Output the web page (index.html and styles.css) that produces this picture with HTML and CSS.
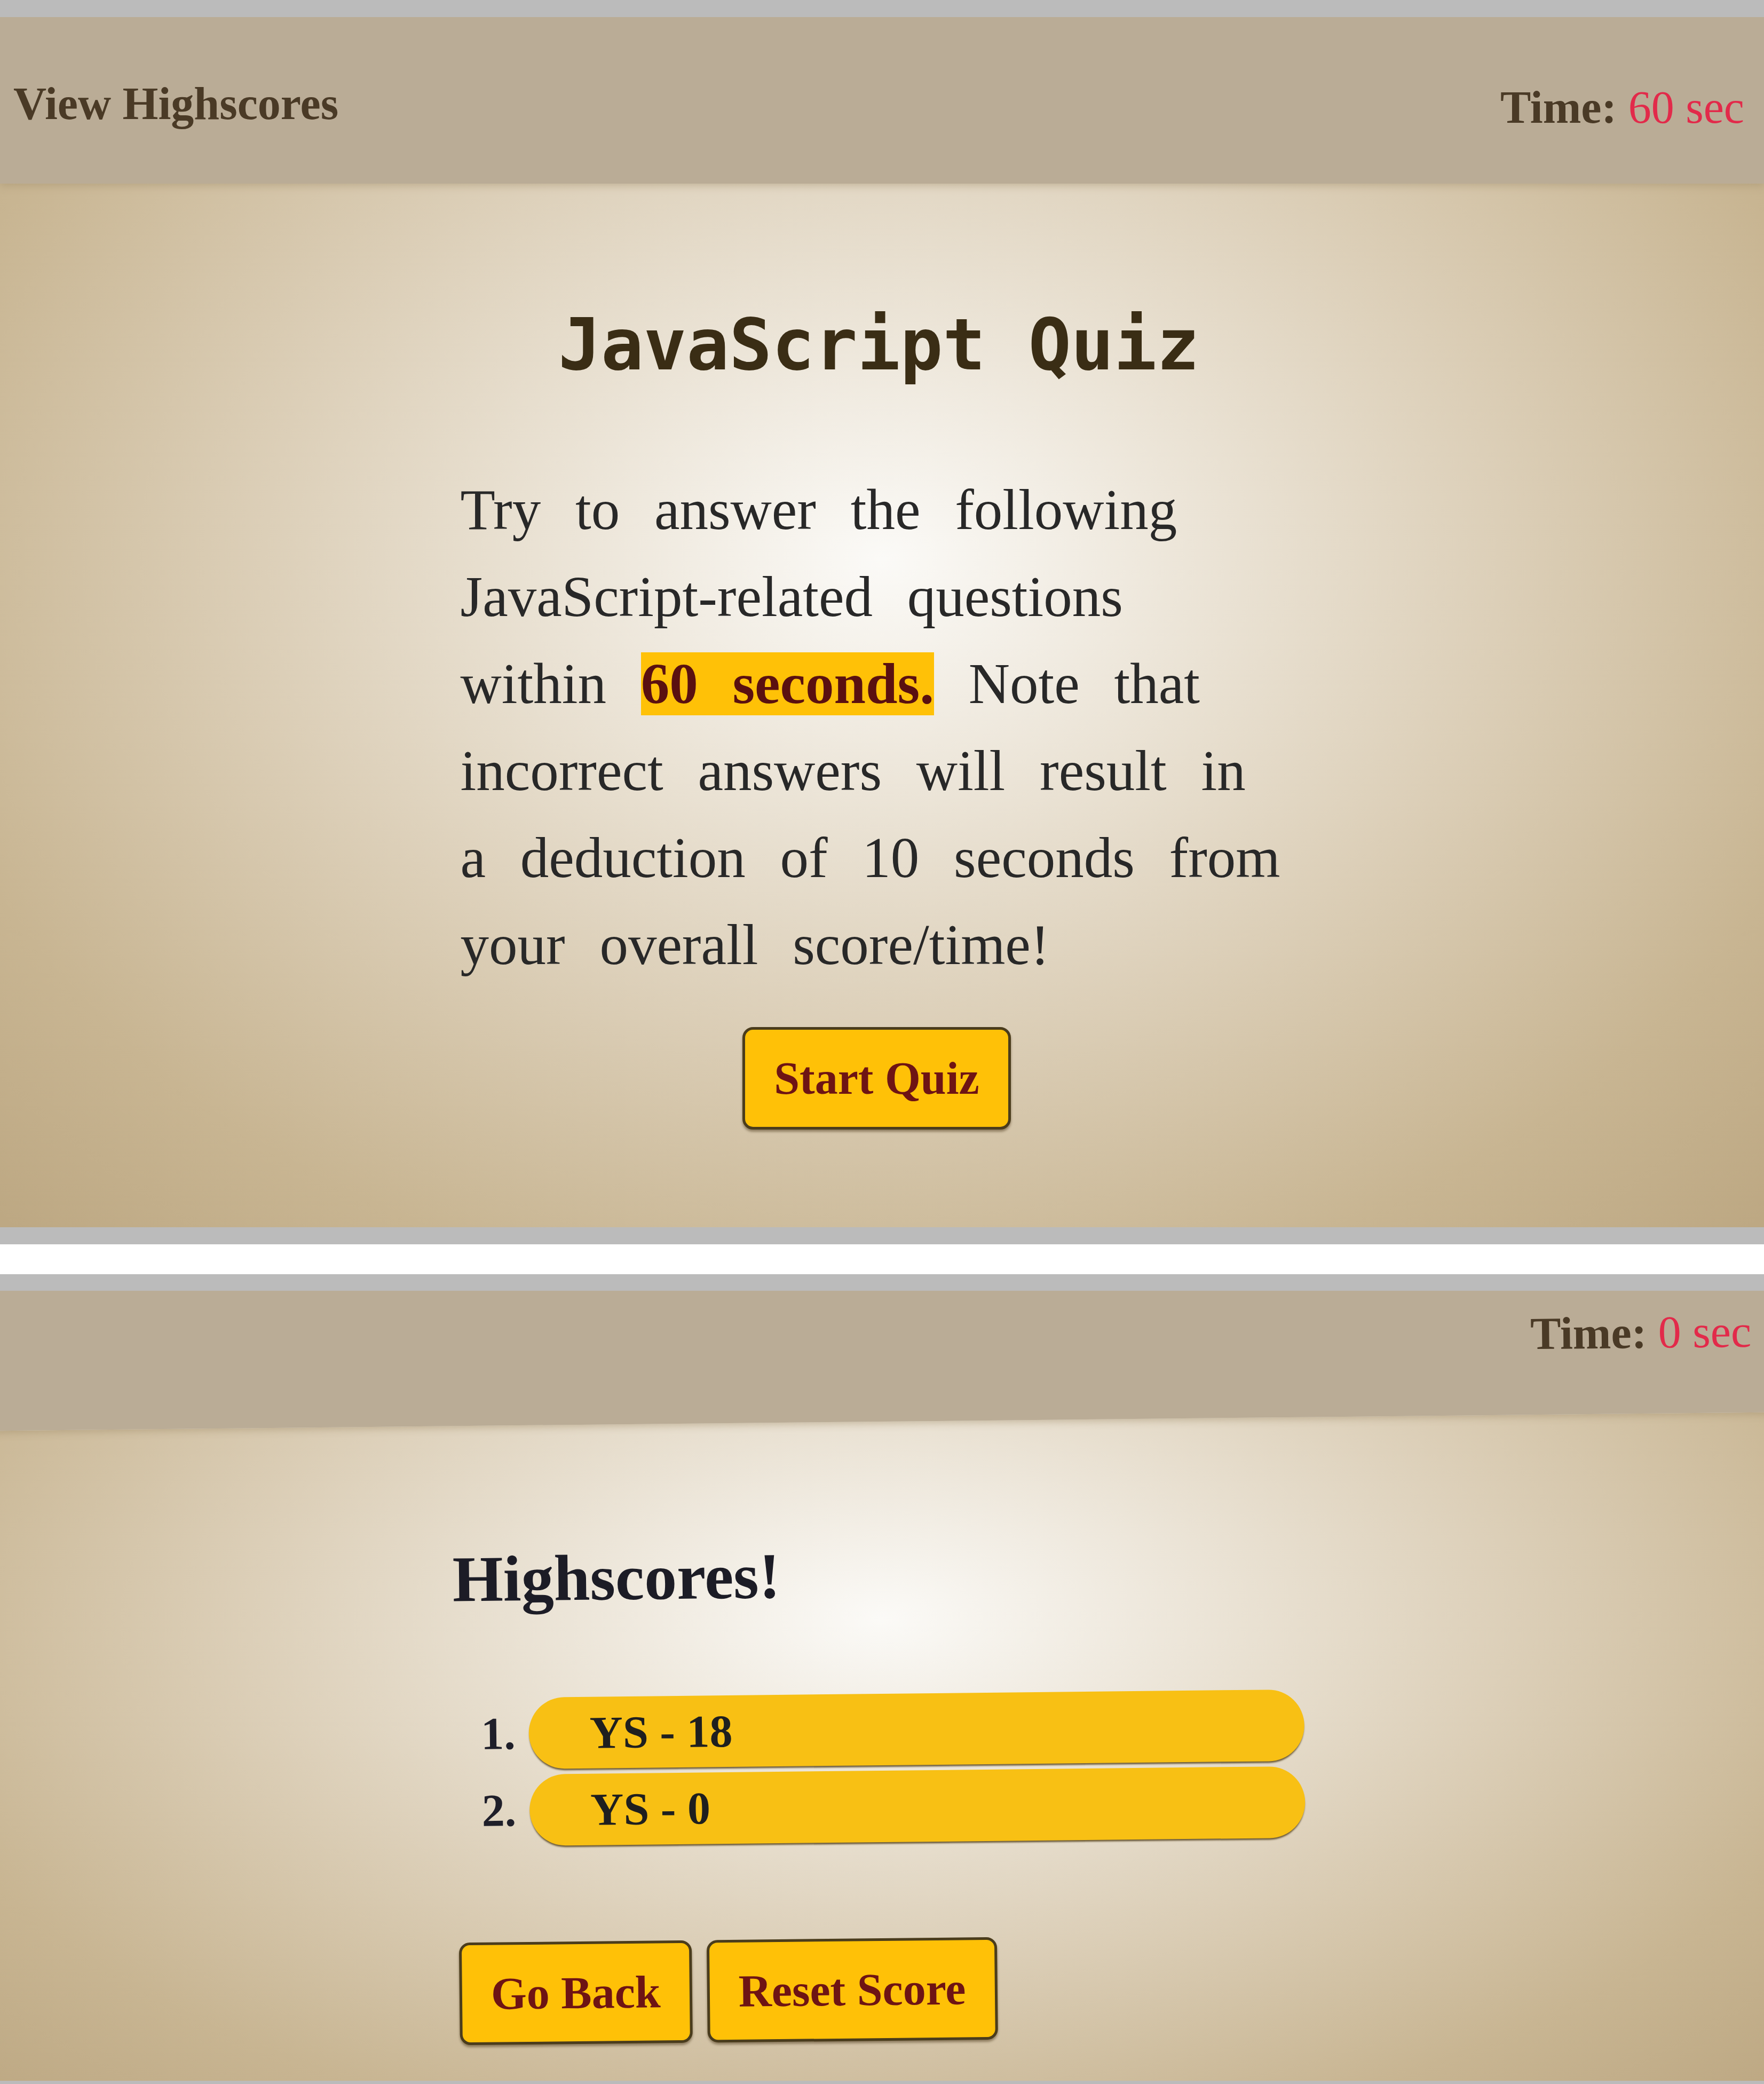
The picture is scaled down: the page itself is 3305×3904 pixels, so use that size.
FILE: index.html
```html
<!DOCTYPE html>
<html lang="en">
<head>
<meta charset="utf-8">
<title>JavaScript Quiz</title>
<link rel="stylesheet" href="styles.css">
</head>
<body>
<section class="shot shot-start">
  <header class="topbar">
    <a class="view-scores">View Highscores</a>
    <div class="timer">Time: <span class="time-val">60 sec</span></div>
  </header>
  <main class="stage stage-start">
    <h1 class="quiz-title">JavaScript Quiz</h1>
    <p class="intro">Try to answer the following JavaScript-related questions within <strong class="hl">60 seconds.</strong> Note that incorrect answers will result in a deduction of 10 seconds from your overall score/time!</p>
    <button class="btn btn-start">Start Quiz</button>
  </main>
</section>
<div class="divider"></div>
<section class="shot shot-scores">
  <div class="tilt">
    <header class="topbar topbar-scores">
      <div class="timer">Time: <span class="time-val">0 sec</span></div>
    </header>
    <main class="stage stage-scores">
      <div class="scores">
        <h2 class="scores-title">Highscores!</h2>
        <ol class="score-list">
          <li class="score-item"><span class="score-bar">YS - 18</span></li>
          <li class="score-item"><span class="score-bar">YS - 0</span></li>
        </ol>
        <div class="actions">
          <button class="btn">Go Back</button>
          <button class="btn">Reset Score</button>
        </div>
      </div>
    </main>
  </div>
</section>
</body>
</html>
```

FILE: styles.css
```css
* {
  box-sizing: border-box;
}

html, body {
  margin: 0;
  padding: 0;
}

body {
  width: 3305px;
  background: #ffffff;
  font-family: "Liberation Serif", "Times New Roman", serif;
}

.shot {
  width: 3305px;
  border-top: 32px solid #bbbbbb;
  border-bottom: 32px solid #bbbbbb;
  overflow: hidden;
}

.divider {
  height: 56px;
  background: #ffffff;
}

/* ---------- header bar ---------- */
.topbar {
  height: 312px;
  display: flex;
  justify-content: space-between;
  align-items: flex-start;
  padding: 0 37px 0 25px;
  background: #baac96;
  box-shadow: 0 4px 14px rgba(160, 140, 105, 0.45);
  position: relative;
  z-index: 1;
  font-weight: bold;
  font-size: 86px;
  line-height: 86px;
  color: #4a3a26;
}

.view-scores {
  margin-top: 119px;
  color: #4a3a26;
}

.timer {
  margin-top: 126px;
}

.time-val {
  font-weight: normal;
  color: #e22a4a;
}

/* ---------- stage ---------- */
.stage {
  background: radial-gradient(ellipse 70% 90% at 50% 36%,
    #fbfaf7 0%, #efe9de 20%, #dccfb8 50%, #c8b592 80%, #bda883 100%);
}

.stage-start {
  height: 1955px;
  padding-top: 236px;
  display: flex;
  flex-direction: column;
  align-items: center;
}

.quiz-title {
  margin: 0 12px 0 0;
  font-family: "DejaVu Sans Mono", "Liberation Mono", monospace;
  font-weight: bold;
  font-size: 133px;
  line-height: 133px;
  color: #3a2d15;
}

.intro {
  width: 1550px;
  margin: 161px 30px 0 0;
  font-size: 107px;
  line-height: 163px;
  word-spacing: 38px;
  color: #282828;
}

.hl {
  background: #ffc107;
  color: #5a1010;
}

.btn {
  font-family: "Liberation Serif", "Times New Roman", serif;
  font-weight: bold;
  font-size: 86px;
  line-height: 86px;
  color: #6e1414;
  background: #ffc107;
  border: 5px solid #4a3c1c;
  border-radius: 20px;
  padding: 48px 54px;
  box-shadow: 0 4px 4px rgba(60, 40, 10, 0.45);
}

.btn-start {
  margin: 72px 20px 0 0;
}

/* ---------- highscores screenshot ---------- */
.shot-scores {
  border-top-width: 31px;
  border-bottom-width: 6px;
  height: 1517px;
}

.tilt {
  width: 3385px;
  margin: -67px -40px 0 -40px;
  transform: rotate(-0.6deg);
}

.topbar-scores {
  justify-content: flex-end;
  padding-right: 57px;
}

.topbar-scores .timer {
  margin-top: 117px;
}

.stage-scores {
  height: 1320px;
  padding: 226px 0 0 890px;
  background: radial-gradient(ellipse 70% 95% at 50% 28%,
    #fbfaf7 0%, #efe9de 20%, #dccfb8 50%, #c8b592 80%, #bda883 100%);
}

.scores-title {
  margin: 0;
  font-size: 122px;
  line-height: 122px;
  font-weight: bold;
  color: #1c1c26;
}

.score-list {
  list-style: none;
  counter-reset: rank;
  margin: 162px 0 0 0;
  padding: 0;
  display: flex;
  flex-direction: column;
  gap: 10px;
}

.score-item {
  counter-increment: rank;
  display: flex;
  align-items: center;
  font-weight: bold;
  font-size: 86px;
  line-height: 86px;
  color: #1f1f2a;
}

.score-item::before {
  content: counter(rank) ".";
  width: 115px;
  margin-right: 25px;
  text-align: right;
}

.score-bar {
  width: 1453px;
  padding: 24px 0 24px 114px;
  background: #f8c014;
  border-radius: 67px;
  box-shadow: 0 4px 3px -1px rgba(70, 50, 10, 0.75);
  color: #1f1f1f;
}

.actions {
  display: flex;
  gap: 28px;
  margin: 180px 0 0 5px;
}
```
